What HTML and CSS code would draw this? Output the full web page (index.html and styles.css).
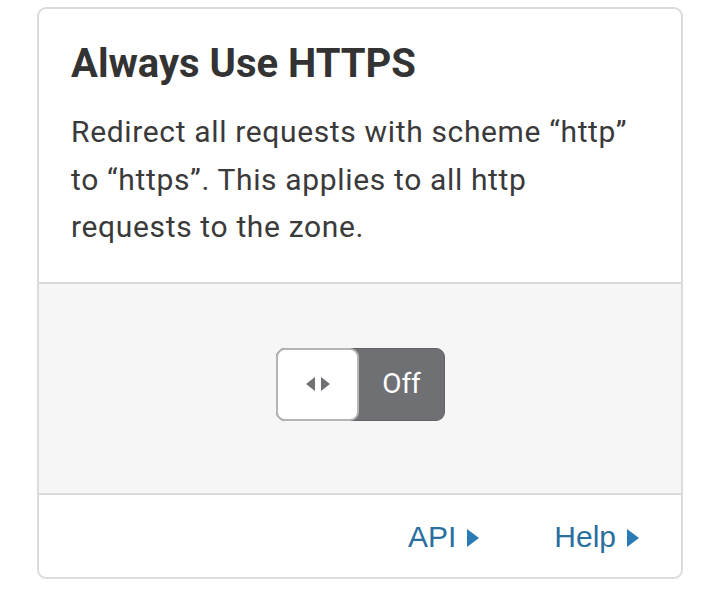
FILE: index.html
```html
<!DOCTYPE html>
<html lang="en">
<head>
<meta charset="utf-8">
<title>Always Use HTTPS</title>
<link rel="stylesheet" href="styles.css">
</head>
<body>
<div class="card">
  <div class="card-body">
    <h2 class="title">Always Use HTTPS</h2>
    <p class="desc">Redirect all requests with scheme “http” to “https”. This applies to all http requests to the zone.</p>
  </div>
  <div class="card-control">
    <div class="toggle">
      <div class="knob">
        <svg class="arrows" width="28" height="18" viewBox="0 0 28 18"><polygon points="11,2 11,16 2,9" fill="#6f7175"/><polygon points="17,2 17,16 26,9" fill="#6f7175"/></svg>
      </div>
      <div class="toggle-label">Off</div>
    </div>
  </div>
  <div class="card-footer">
    <a class="link" href="#">API<span class="tri"></span></a>
    <a class="link" href="#">Help<span class="tri"></span></a>
  </div>
</div>
</body>
</html>
```
FILE: styles.css
```css
html, body {
  margin: 0;
  padding: 0;
  background: #ffffff;
}
body {
  padding: 7px 0 0 37px;
}
.card {
  width: 642px;
  border: 2px solid #dcdcdc;
  border-radius: 9px;
  background: #fff;
  overflow: hidden;
}
.card-body {
  padding: 31px 30px 31px 32px;
  border-bottom: 2px solid #dadada;
}
.title {
  margin: 0;
  font-family: Roboto, "Liberation Sans", sans-serif;
  font-weight: 700;
  font-size: 40px;
  line-height: 48px;
  color: #333333;
}
.desc {
  margin: 20px 0 0 0;
  font-family: Roboto, "Liberation Sans", sans-serif;
  font-size: 30px;
  letter-spacing: 0.65px;
  line-height: 47.5px;
  color: #3a3a3a;
}
.card-control {
  background: #f6f6f6;
  height: 211px;
  display: flex;
  align-items: center;
  justify-content: center;
  border-bottom: 2px solid #dadada;
  padding-bottom: 8px;
  box-sizing: border-box;
}
.toggle {
  display: flex;
  width: 169px;
  height: 73px;
  background: #6e7074;
  border-radius: 9px;
  box-sizing: border-box;
  border: 1px solid #606266;
  margin-left: 1px;
}
.knob {
  width: 83px;
  margin: -1px 0 -1px -1px;
  background: #ffffff;
  border: 2px solid #b5b5b5;
  border-radius: 9px;
  box-sizing: border-box;
  display: flex;
  align-items: center;
  justify-content: center;
}
.arrows {
  display: block;
}
.toggle-label {
  flex: 1;
  display: flex;
  align-items: center;
  justify-content: center;
  font-family: Roboto, "Open Sans", sans-serif;
  font-size: 28px;
  color: #ffffff;
  padding-bottom: 2px;
}
.card-footer {
  display: flex;
  justify-content: flex-end;
  gap: 75px;
  padding: 22px 42px 20px 0;
}
.link {
  display: flex;
  align-items: center;
  gap: 11px;
  font-family: "Liberation Sans", Arial, sans-serif;
  font-size: 30px;
  line-height: 40px;
  color: #2b6f9f;
  text-decoration: none;
}
.tri {
  width: 0;
  height: 0;
  border-top: 9px solid transparent;
  border-bottom: 9px solid transparent;
  border-left: 12px solid #2a7ab6;
  margin-top: 2px;
}
```
